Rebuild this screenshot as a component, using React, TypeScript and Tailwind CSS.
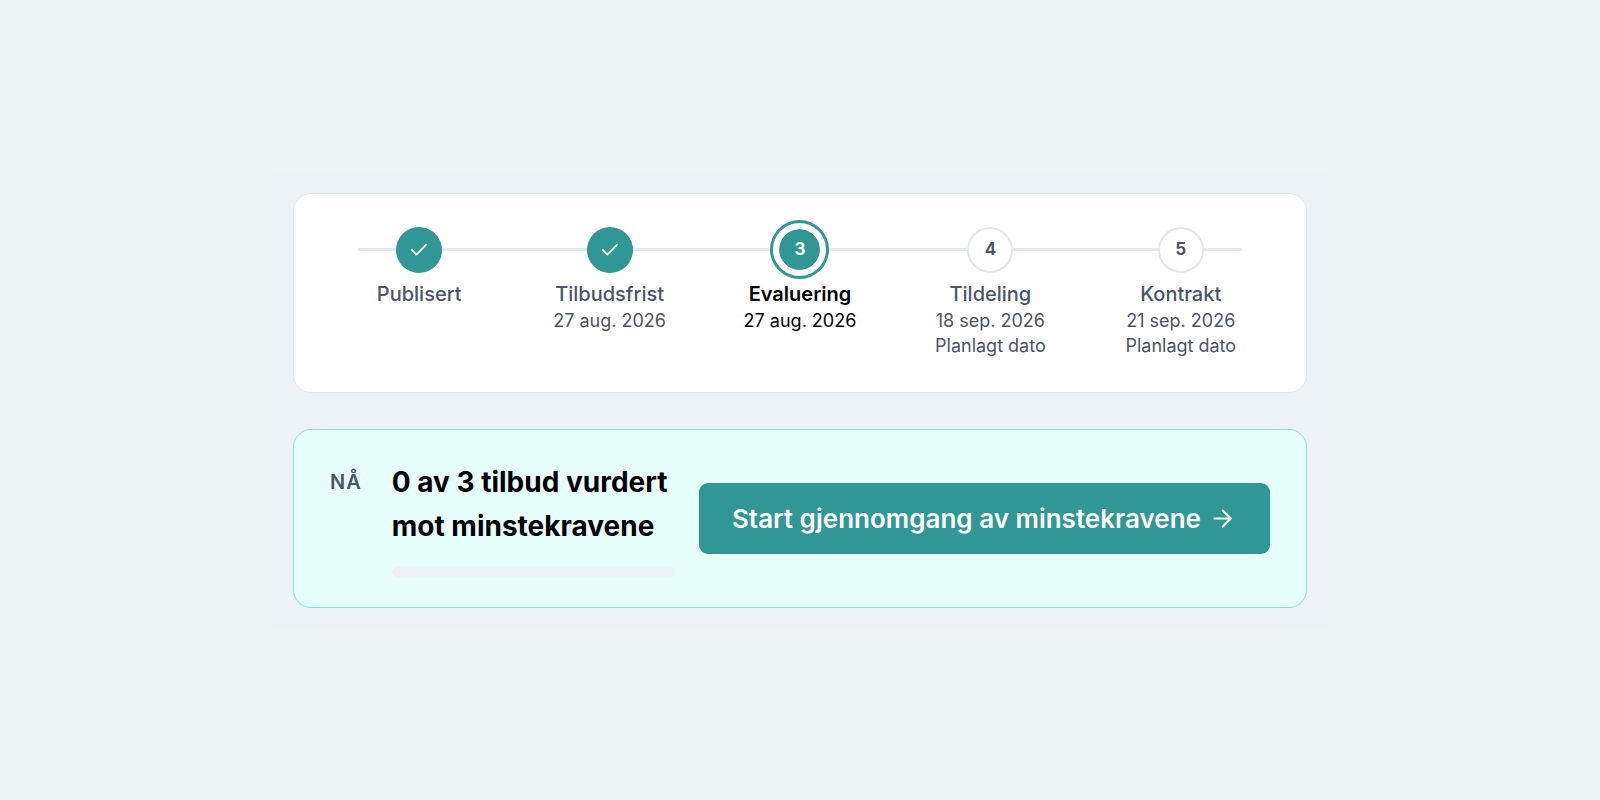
type StepState = "done" | "current" | "upcoming";

interface Step {
  label: string;
  state: StepState;
  date?: string;
  note?: string;
}

const steps: Step[] = [
  { label: "Publisert", state: "done" },
  { label: "Tilbudsfrist", state: "done", date: "27 aug. 2026" },
  { label: "Evaluering", state: "current", date: "27 aug. 2026" },
  { label: "Tildeling", state: "upcoming", date: "18 sep. 2026", note: "Planlagt dato" },
  { label: "Kontrakt", state: "upcoming", date: "21 sep. 2026", note: "Planlagt dato" },
];

function ArrowIcon() {
  return (
    <svg className="h-6 w-6" viewBox="0 0 24 24" fill="none" stroke="currentColor" strokeWidth="2.2" strokeLinecap="round" strokeLinejoin="round" aria-hidden="true">
      <path d="M1.5 11.5h16.3M9.8 3.5l8 8-8 8" />
    </svg>
  );
}

function CheckIcon() {
  return (
    <svg className="h-[46px] w-[46px]" viewBox="0 0 46 46" fill="none" stroke="currentColor" strokeWidth="1.8" strokeLinecap="round" strokeLinejoin="round" aria-hidden="true">
      <path d="M15.8 22.9 20.4 27.6 30.2 17.6" />
    </svg>
  );
}

function Marker({ step, number }: { step: Step; number: number }) {
  if (step.state === "done") {
    return (
      <span className="flex size-[46px] items-center justify-center rounded-full bg-[#319795] text-white">
        <CheckIcon />
      </span>
    );
  }
  if (step.state === "current") {
    return (
      <span className="flex size-[47px] items-center justify-center rounded-full border-3 border-white bg-[#319795] bg-clip-padding text-[17px] font-bold text-white ring-3 ring-[#319795] ring-offset-3 ring-offset-white">
        {number}
      </span>
    );
  }
  return (
    <span className="flex size-[46px] items-center justify-center rounded-full border-2 border-[#e2e8f0] bg-white text-[17px] font-bold text-[#4a5568]">
      {number}
    </span>
  );
}

function Timeline() {
  return (
    <section className="relative rounded-[18px] border border-[#e2e8f0] bg-white px-[30px] pt-[33px] pb-[34px]">
      <div className="absolute inset-x-16 top-[54px] h-[3px] bg-[#e2e8f0]" />
      <ol className="relative grid grid-cols-5">
        {steps.map((step, index) => (
          <li
            key={step.label}
            className={
              step.state === "current"
                ? "flex flex-col items-center text-center text-black"
                : "flex flex-col items-center text-center text-[#4a5568]"
            }
          >
            <div className="flex h-[46px] items-center">
              <Marker step={step} number={index + 1} />
            </div>
            <span className={step.state === "current" ? "mt-[7px] text-[20px] leading-[28px] font-semibold" : "mt-[7px] text-[20px] leading-[28px] font-medium"}>
              {step.label}
            </span>
            {step.date && <span className="text-[18px] leading-[25px]">{step.date}</span>}
            {step.note && <span className="text-[18px] leading-[25px]">{step.note}</span>}
          </li>
        ))}
      </ol>
    </section>
  );
}

function NextAction() {
  return (
    <section className="flex items-center gap-6 rounded-[18px] border border-[#81e6d9] bg-[#e6fffa] px-9 pt-[30px] pb-[29px]">
      <div className="flex min-w-0 flex-1 gap-[30px]">
        <span className="pt-[5px] text-[20px] leading-[34px] font-semibold tracking-wider text-[#4a5568]">NÅ</span>
        <div className="min-w-0 flex-1">
          <h2 id="progress-title" className="text-[28px] leading-[44px] font-bold text-black">
            0 av 3 tilbud vurdert mot minstekravene
          </h2>
          <div
            role="progressbar"
            aria-labelledby="progress-title"
            aria-valuemin={0}
            aria-valuemax={3}
            aria-valuenow={0}
            className="mt-[18px] h-3 rounded-full bg-[#edf2f7]"
          />
        </div>
      </div>
      <button type="button" className="flex h-[71px] shrink-0 items-center gap-3 rounded-[9px] bg-[#319795] px-[33px] text-[26px] font-semibold text-white">
        Start gjennomgang av minstekravene
        <ArrowIcon />
      </button>
    </section>
  );
}

export default function App() {
  return (
    <div className="flex min-h-screen items-center justify-center bg-[#eef3f6] font-['Inter','Liberation_Sans',sans-serif]">
      <main className="flex w-full max-w-[1054px] flex-col gap-9 bg-[#edf2f7] p-5">
        <Timeline />
        <NextAction />
      </main>
    </div>
  );
}
